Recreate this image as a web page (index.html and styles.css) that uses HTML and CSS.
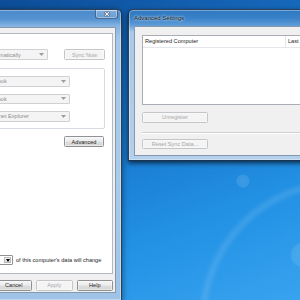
FILE: index.html
```html
<!DOCTYPE html>
<html>
<head>
<meta charset="utf-8">
<link rel="stylesheet" href="styles.css">
</head>
<body>
<div class="desktop">
  <div class="arc"></div>
  <div class="bokeh b1"></div>
  <div class="bokeh b2"></div>

  <div class="win win-main">
    <div class="titlebar main-title">
      <div class="close">
        <svg width="8" height="6" viewBox="0 0 8 6"><path d="M2 1L6 5M6 1L2 5" stroke="#3b4b60" stroke-width="2.4"/><path d="M2.2 1.2L5.8 4.8M5.8 1.2L2.2 4.8" stroke="#ffffff" stroke-width="1.1"/></svg>
      </div>
    </div>
    <div class="client main-client">
      <div class="page">
        <div class="row sync-row">
          <div class="combo dis w-auto"><span class="val">Automatically</span><svg class="arr" width="5" height="3" viewBox="0 0 5 3"><path d="M0 0h5L2.5 3z"/></svg></div>
          <div class="btn dis w-sync">Sync Now</div>
        </div>
        <div class="group">
          <div class="combo dis w-app"><span class="val">Outlook</span><svg class="arr" width="5" height="3" viewBox="0 0 5 3"><path d="M0 0h5L2.5 3z"/></svg></div>
          <div class="combo dis w-app"><span class="val">Outlook</span><svg class="arr" width="5" height="3" viewBox="0 0 5 3"><path d="M0 0h5L2.5 3z"/></svg></div>
          <div class="combo dis w-app"><span class="val">Internet Explorer</span><svg class="arr" width="5" height="3" viewBox="0 0 5 3"><path d="M0 0h5L2.5 3z"/></svg></div>
        </div>
        <div class="row adv-row">
          <div class="btn w-adv">Advanced</div>
        </div>
        <div class="row data-row">
          <div class="mini"><span class="mini-drop"><svg width="4" height="3" viewBox="0 0 4 3"><path d="M0 0h4L2 3z" fill="#000"/></svg></span></div>
          <span class="note">of this computer's data will change</span>
        </div>
      </div>
      <div class="actions">
        <div class="btn w-act">Cancel</div>
        <div class="btn dis w-act">Apply</div>
        <div class="btn w-act">Help</div>
      </div>
    </div>
  </div>

  <div class="win win-adv">
    <div class="titlebar adv-title"><span class="title">Advanced Settings</span></div>
    <div class="client adv-client">
      <div class="list">
        <div class="list-head">
          <span class="col c1">Registered Computer</span>
          <span class="col c2">Last</span>
        </div>
      </div>
      <div class="btn dis w-wide unreg">Unregister</div>
      <div class="sep"></div>
      <div class="btn dis w-wide reset">Reset Sync Data...</div>
    </div>
  </div>
</div>
</body>
</html>
```

FILE: styles.css
```css
* { box-sizing: border-box; margin: 0; padding: 0; }
html, body { width: 300px; height: 300px; overflow: hidden; }
body {
  font-family: "Liberation Sans", Arial, sans-serif;
  font-size: 5.6px;
  color: #1e1e1e;
}
.desktop {
  position: relative;
  width: 300px;
  height: 300px;
  overflow: hidden;
  background: linear-gradient(160deg, #0d4d98 0%, #1463b5 22%, #1a7dd3 50%, #2291e4 72%, #38a3ef 100%);
}
.arc {
  position: absolute;
  left: 200px;
  top: 180px;
  width: 280px;
  height: 280px;
  border-radius: 50%;
  border: 6px solid rgba(255, 255, 255, 0.12);
  filter: blur(2px);
}
.bokeh {
  position: absolute;
  border-radius: 50%;
  background: radial-gradient(circle, rgba(255,255,255,0.13) 0%, rgba(255,255,255,0.1) 60%, rgba(255,255,255,0) 72%);
}
.b1 { left: 236px; top: 174px; width: 14px; height: 14px; }
.b2 { left: 290px; top: 242px; width: 26px; height: 26px; }

/* windows */
.win {
  position: absolute;
  display: flex;
  flex-direction: column;
  border: 1px solid rgba(22, 40, 64, 0.85);
  border-radius: 5px 5px 0 0;
  box-shadow: 0 1px 6px rgba(0, 0, 0, 0.5), inset 0 0 0 1px rgba(255, 255, 255, 0.35);
}
.win-main {
  left: -106px;
  top: 9px;
  width: 228px;
  height: 292px;
  padding: 0 5px 7px;
  background: linear-gradient(to bottom, #4a8acb 0px, #5592d0 9px, #86b4e2 16px, #a5c8ea 30px, #a9cbea 60%, #9fc3e6 100%);
}
.win-adv {
  left: 128px;
  top: 9px;
  width: 200px;
  height: 152px;
  padding: 0 5px 4px;
  background: linear-gradient(to bottom, #2f79c2 0px, #3981c8 8px, #5d9bd6 15px, #a8c9ea 22px, #b3d0ec 100%);
  box-shadow: 0 2px 5px rgba(0, 0, 0, 0.7), inset 0 0 0 1px rgba(255, 255, 255, 0.35);
}

.titlebar {
  display: flex;
  align-items: flex-start;
}
.main-title {
  height: 17px;
  justify-content: flex-end;
}
.close {
  width: 23px;
  height: 9px;
  margin-right: -2px;
  display: flex;
  align-items: center;
  justify-content: center;
  border: 1px solid rgba(30, 50, 80, 0.55);
  border-top: none;
  border-radius: 0 0 3px 3px;
  background: linear-gradient(to bottom, rgba(255,255,255,0.30), rgba(255,255,255,0.12));
  box-shadow: inset 0 0 0 1px rgba(255, 255, 255, 0.35);
}
.adv-title {
  height: 16px;
  align-items: center;
}
.title {
  font-size: 6px;
  color: #101820;
  text-shadow: 0 0 3px rgba(255,255,255,0.85), 0 0 2px rgba(255,255,255,0.7);
  padding-top: 1px;
}

.client {
  background: #f0f0f0;
  border: 1px solid rgba(50, 80, 120, 0.55);
}
.main-client {
  height: 266px;
  display: flex;
  flex-direction: column;
  padding: 5px 2px 2px 5px;
}

/* tab page */
.page {
  height: 241px;
  background: #ffffff;
  border: 1px solid #b4b9c0;
  padding: 15px 7px 8px 73px;
  display: flex;
  flex-direction: column;
}
.row { display: flex; align-items: center; }
.sync-row {
  justify-content: space-between;
  padding-left: 4px;
}
.combo {
  height: 11px;
  display: flex;
  align-items: center;
  justify-content: space-between;
  padding: 0 2.5px;
  border: 1px solid #cfd1d3;
  border-radius: 1px;
  background: #f4f4f4;
  white-space: nowrap;
  overflow: hidden;
}
.combo.dis { color: #8d8d8d; }
.combo .arr { flex: none; fill: #9c9c9c; margin-right: 1px; }
.val { overflow: hidden; }
.w-auto { width: 64px; }
.w-app { width: 86px; }

.group {
  margin-top: 8px;
  height: 61px;
  border: 1px solid #d5dbe0;
  border-radius: 2px;
  padding: 7px 0 0 3px;
  display: flex;
  flex-direction: column;
  gap: 7px;
}
.group .combo { height: 10.5px; }

.btn {
  height: 11px;
  display: flex;
  align-items: center;
  justify-content: center;
  border: 1px solid #8f9194;
  border-radius: 1.5px;
  background: linear-gradient(to bottom, #f5f5f5 0%, #ececec 48%, #dedede 52%, #d4d4d4 100%);
  color: #1e1e1e;
  white-space: nowrap;
  box-shadow: inset 0 0 0 0.5px rgba(255,255,255,0.8);
}
.btn.dis {
  border-color: #c3c6c9;
  background: #f4f4f4;
  color: #a8a8a8;
}
.w-sync { width: 41px; }
.adv-row {
  margin-top: 7px;
  justify-content: flex-end;
  padding-right: 1px;
}
.w-adv { width: 40px; }

.data-row {
  margin-top: auto;
  padding-left: 4px;
  gap: 3px;
}
.mini {
  width: 29px;
  height: 10px;
  display: flex;
  justify-content: flex-end;
  border: 1px solid #8e9296;
  border-radius: 1px;
  background: #ffffff;
  padding: 1px;
}
.mini-drop {
  width: 7px;
  display: flex;
  align-items: center;
  justify-content: center;
  background: linear-gradient(to bottom, #f3f3f3, #dcdcdc);
  border: 0.5px solid #b9bcbf;
}
.note { white-space: nowrap; }

.actions {
  margin-top: 6px;
  height: 10px;
  display: flex;
  justify-content: flex-end;
  gap: 4px;
}
.actions .btn { height: 10.5px; }
.w-act { width: 36.5px; }

/* advanced settings */
.adv-client {
  height: 131px;
  padding: 8px 0 0 7px;
  display: flex;
  flex-direction: column;
  align-items: flex-start;
}
.list {
  width: 200px;
  height: 70px;
  border: 1px solid #a9aeb5;
  background: #ffffff;
}
.list-head {
  height: 12px;
  display: flex;
  border-bottom: 1px solid #e3e6ea;
}
.col {
  display: flex;
  align-items: center;
  padding-left: 2px;
  white-space: nowrap;
}
.c1 { width: 143px; border-right: 1px solid #e3e6ea; }
.c2 { flex: 1; }
.w-wide { width: 66px; }
.unreg { margin-top: 7px; }
.sep {
  margin-top: 9px;
  width: 200px;
  height: 2px;
  border-top: 1px solid #d0d0d0;
  border-bottom: 1px solid #ffffff;
}
.reset { margin-top: 5px; height: 10.5px; }
```
